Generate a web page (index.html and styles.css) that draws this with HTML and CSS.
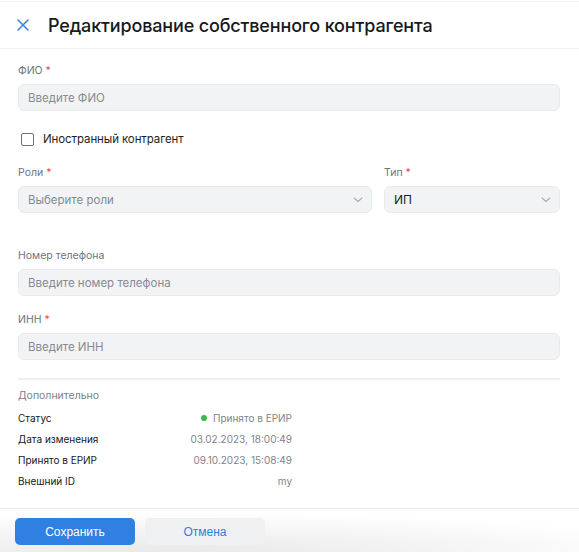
FILE: index.html
```html
<!DOCTYPE html>
<html lang="ru">
<head>
<meta charset="utf-8">
<link rel="stylesheet" href="styles.css">
</head>
<body>
<div class="page">
  <header class="header">
    <svg class="close" width="12" height="12" viewBox="0 0 12 12"><path d="M1 1L11 11M11 1L1 11" stroke="#3b86e3" stroke-width="1.6" stroke-linecap="round"/></svg>
    <h1 class="title">Редактирование собственного контрагента</h1>
  </header>
  <main class="content">
    <div class="field">
      <div class="label">ФИО <span class="req">*</span></div>
      <div class="input placeholder">Введите ФИО</div>
    </div>
    <label class="check">
      <span class="box"></span>
      <span>Иностранный контрагент</span>
    </label>
    <div class="row2">
      <div class="field">
        <div class="label">Роли <span class="req">*</span></div>
        <div class="input select placeholder">Выберите роли
          <svg class="chev" width="10" height="6" viewBox="0 0 10 6"><path d="M1 1L5 4.5L9 1" fill="none" stroke="#a8acb3" stroke-width="1.1" stroke-linecap="round" stroke-linejoin="round"/></svg>
        </div>
      </div>
      <div class="field">
        <div class="label">Тип <span class="req">*</span></div>
        <div class="input select value">ИП
          <svg class="chev" width="10" height="6" viewBox="0 0 10 6"><path d="M1 1L5 4.5L9 1" fill="none" stroke="#a8acb3" stroke-width="1.1" stroke-linecap="round" stroke-linejoin="round"/></svg>
        </div>
      </div>
    </div>
    <div class="field phone">
      <div class="label">Номер телефона</div>
      <div class="input placeholder">Введите номер телефона</div>
    </div>
    <div class="field inn">
      <div class="label">ИНН <span class="req">*</span></div>
      <div class="input placeholder">Введите ИНН</div>
    </div>
    <div class="divider"></div>
    <section class="extra">
      <div class="extra-title">Дополнительно</div>
      <div class="details">
        <div class="k">Статус</div><div class="v"><span class="dot"></span>Принято в ЕРИР</div>
        <div class="k">Дата изменения</div><div class="v">03.02.2023, 18:00:49</div>
        <div class="k">Принято в ЕРИР</div><div class="v">09.10.2023, 15:08:49</div>
        <div class="k">Внешний ID</div><div class="v">my</div>
      </div>
    </section>
  </main>
  <footer class="footer">
    <button class="btn primary">Сохранить</button>
    <button class="btn secondary">Отмена</button>
  </footer>
</div>
</body>
</html>
```
FILE: styles.css
```css
html, body {
  margin: 0;
  padding: 0;
  background: #fff;
}
body {
  font-family: Inter, "Noto Sans", sans-serif;
  color: #1d1f23;
}
.page {
  width: 579px;
  height: 552px;
  display: flex;
  flex-direction: column;
  overflow: hidden;
}
.header {
  margin-top: 1px;
  border-top: 1px solid #eeeff1;
  border-bottom: 1px solid #eeeff1;
  height: 46px;
  display: flex;
  align-items: center;
  padding-left: 17px;
  gap: 19px;
}
.close { flex: none; }
.title {
  margin: 0;
  font-size: 18px;
  font-weight: 500;
  letter-spacing: -0.15px;
  color: #17191c;
}
.content {
  padding: 15px 19px 0 18px;
  display: flex;
  flex-direction: column;
}
.field {
  display: flex;
  flex-direction: column;
  gap: 6px;
}
.label {
  font-size: 10.5px;
  line-height: 14px;
  color: #6f737a;
}
.req { color: #e5484d; }
.input {
  height: 27px;
  box-sizing: border-box;
  border: 1px solid #e9eaed;
  background: #f2f3f5;
  border-radius: 6px;
  padding: 0 9px;
  display: flex;
  align-items: center;
  font-size: 11.5px;
}
.placeholder { color: #868b93; }
.value { color: #1d1f23; font-size: 12px; }
.select { justify-content: space-between; padding-right: 8px; }
.chev { flex: none; }
.check {
  margin-top: 20px;
  display: flex;
  align-items: center;
  gap: 9px;
  font-size: 11.5px;
  line-height: 16px;
  letter-spacing: -0.1px;
  color: #1d1f23;
  padding-left: 3px;
}
.box {
  width: 11px;
  height: 11px;
  border: 1px solid #6c7077;
  border-radius: 2px;
  box-sizing: content-box;
}
.row2 {
  margin-top: 19px;
  display: grid;
  grid-template-columns: 354px 1fr;
  gap: 12px;
}
.phone { margin-top: 36px; }
.inn { margin-top: 17px; }
.divider {
  margin-top: 18px;
  height: 2px;
  background: #eeeff1;
}
.extra { margin-top: 9px; }
.extra-title {
  font-size: 10.5px;
  line-height: 14px;
  color: #7d8188;
}
.details {
  margin-top: 8px;
  width: 274px;
  display: grid;
  grid-template-columns: 1fr auto;
  row-gap: 7px;
  font-size: 10px;
  line-height: 14px;
}
.k { color: #17191c; }
.v {
  color: #7f838a;
  text-align: right;
  display: flex;
  align-items: center;
  justify-content: flex-end;
}
.dot {
  width: 6px;
  height: 6px;
  border-radius: 50%;
  background: #3cb84a;
  margin-right: 6px;
}
.footer {
  margin-top: auto;
  border-top: 1px solid #e9eaec;
  height: 44px;
  padding: 9px 0 0 15px;
  box-sizing: border-box;
  display: flex;
  align-items: flex-start;
  gap: 10px;
  background: radial-gradient(ellipse 520px 40px at 30% 100%, rgba(0,0,0,0.09), rgba(0,0,0,0) 100%);
}
.btn {
  height: 27px;
  width: 120px;
  border-radius: 5px;
  border: none;
  font-family: "Liberation Sans", Arial, sans-serif;
  font-size: 12px;
  cursor: pointer;
}
.primary {
  background: #2f80e1;
  color: #fff;
}
.secondary {
  background: #eff0f2;
  color: #2f7fe0;
}
```
